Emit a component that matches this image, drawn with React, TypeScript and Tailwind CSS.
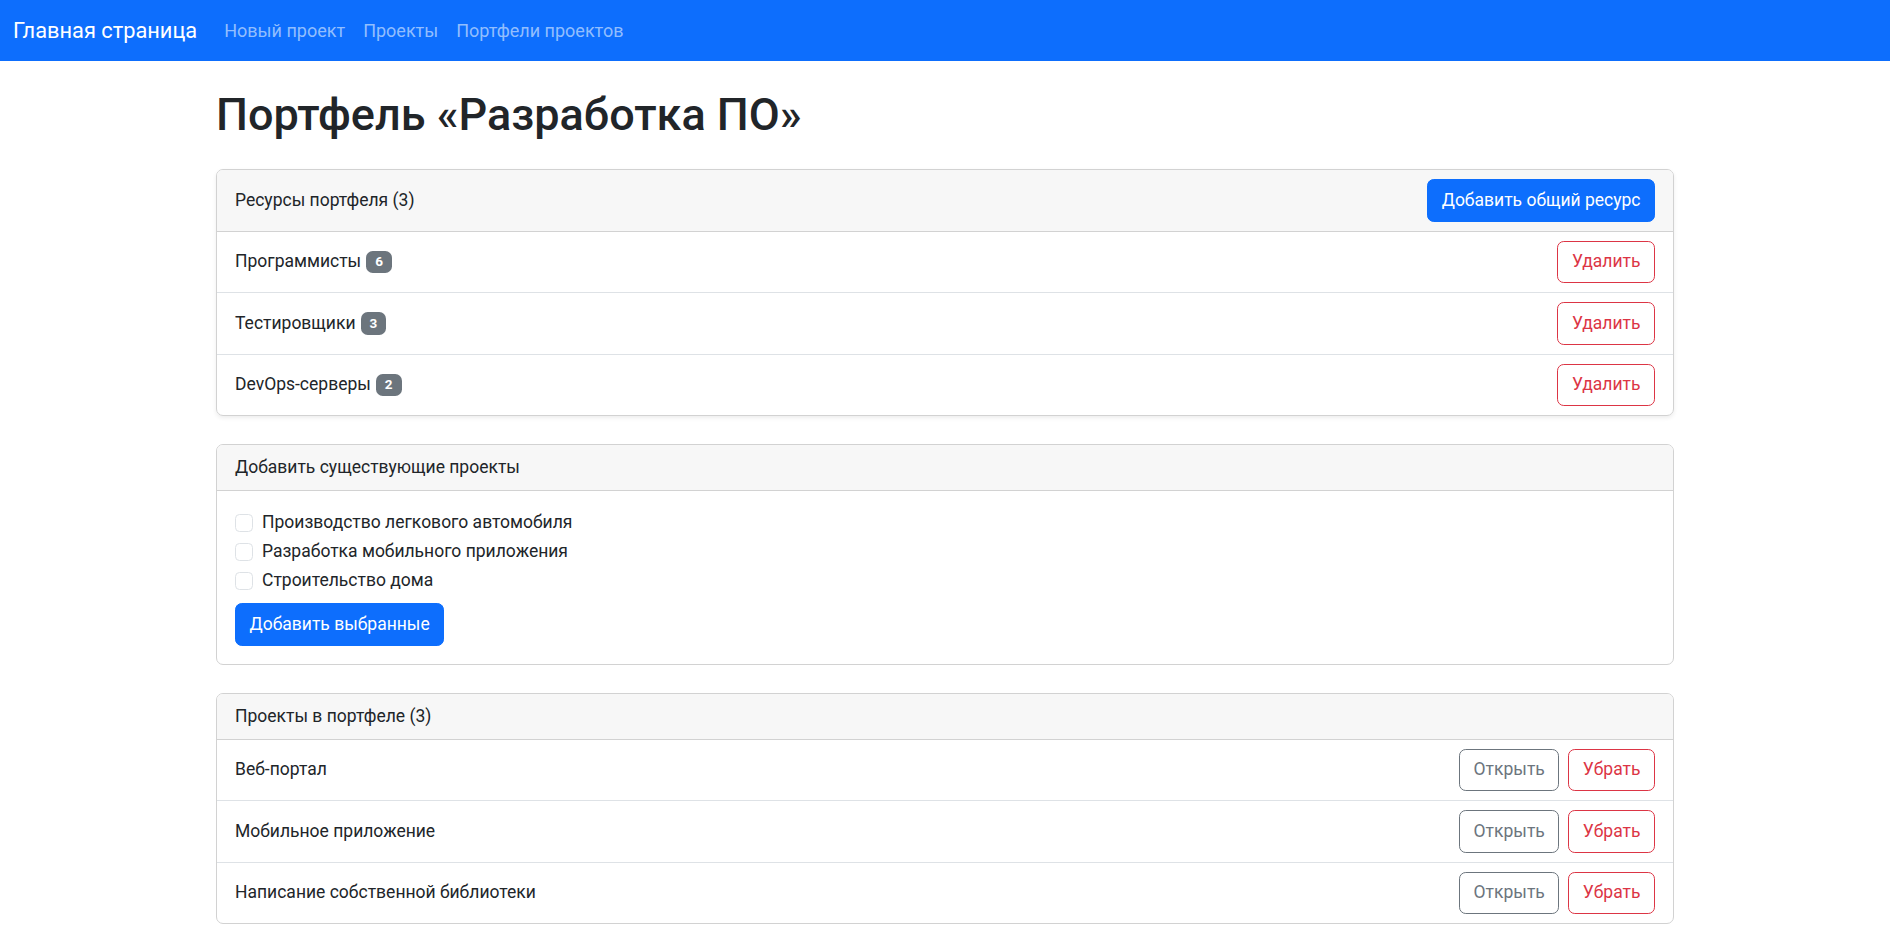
import React from "react";

function Badge({ n }: { n: number }) {
  return (
    <span className="ml-[5px] inline-block rounded-[6.75px] bg-[#6c757d] px-[9px] py-[4.5px] align-[1px] text-[13.5px] font-bold leading-[13.5px] text-white">
      {n}
    </span>
  );
}

function Check({ label }: { label: string }) {
  return (
    <label className="mb-[2px] flex h-[27px] items-center gap-[9px]">
      <input
        type="checkbox"
        className="h-[18px] w-[18px] shrink-0 appearance-none rounded-[4.5px] border border-[#dee2e6] bg-white"
      />
      <span>{label}</span>
    </label>
  );
}

export default function App() {
  const resources = [
    { name: "Программисты", n: 6 },
    { name: "Тестировщики", n: 3 },
    { name: "DevOps-серверы", n: 2 },
  ];
  const projects = ["Веб-портал", "Мобильное приложение", "Написание собственной библиотеки"];
  return (
    <div className="h-[930px] overflow-hidden bg-white font-['Roboto',sans-serif] text-[17.5px] leading-[27px] text-[#212529]">
      <nav className="flex h-[61px] items-center bg-[#0d6efd] px-[13px]">
        <a className="mr-[18px] text-[21.8px] leading-[34px] text-white">Главная страница</a>
        <ul className="flex text-[18px]">
          <li className="px-[9px] text-[#92befe]">Новый проект</li>
          <li className="px-[9px] text-[#92befe]">Проекты</li>
          <li className="px-[9px] text-[#92befe]">Портфели проектов</li>
        </ul>
      </nav>

      <main className="mx-auto w-[1458px] pt-[27px]">
        <h1 className="mb-[27px] text-[45px] font-medium leading-[54px]">Портфель «Разработка ПО»</h1>

        <section className="mb-[28px] overflow-hidden rounded-[7px] border border-[#d2d2d2] shadow-[0_2px_4px_rgba(0,0,0,0.075)]">
          <div className="flex items-center justify-between border-b border-[#d2d2d2] bg-[#f7f7f7] px-[18px] py-[9px]">
            <span>Ресурсы портфеля (3)</span>
            <button className="rounded-[6.75px] border border-[#0d6efd] bg-[#0d6efd] px-[13.5px] py-[6.75px] text-white">
              Добавить общий ресурс
            </button>
          </div>
          {resources.map((r) => (
            <div
              key={r.name}
              className="flex items-center justify-between border-b border-[#dee2e6] px-[18px] py-[9px] last:border-b-0"
            >
              <span>
                {r.name}
                <Badge n={r.n} />
              </span>
              <button className="rounded-[6.75px] border border-[#dc3545] bg-white px-[13.5px] py-[6.75px] text-[#dc3545]">
                Удалить
              </button>
            </div>
          ))}
        </section>

        <section className="mb-[28px] overflow-hidden rounded-[7px] border border-[#d2d2d2]">
          <div className="border-b border-[#d2d2d2] bg-[#f7f7f7] px-[18px] py-[9px]">Добавить существующие проекты</div>
          <div className="p-[18px]">
            <Check label="Производство легкового автомобиля" />
            <Check label="Разработка мобильного приложения" />
            <Check label="Строительство дома" />
            <button className="mt-[7px] rounded-[6.75px] border border-[#0d6efd] bg-[#0d6efd] px-[13.5px] py-[6.75px] text-white">
              Добавить выбранные
            </button>
          </div>
        </section>

        <section className="overflow-hidden rounded-[7px] border border-[#d2d2d2]">
          <div className="border-b border-[#d2d2d2] bg-[#f7f7f7] px-[18px] py-[9px]">Проекты в портфеле (3)</div>
          {projects.map((p) => (
            <div
              key={p}
              className="flex items-center justify-between border-b border-[#dee2e6] px-[18px] py-[9px] last:border-b-0"
            >
              <span>{p}</span>
              <div className="flex gap-[9px]">
                <button className="rounded-[6.75px] border border-[#6c757d] bg-white px-[13.5px] py-[6.75px] text-[#6c757d]">
                  Открыть
                </button>
                <button className="rounded-[6.75px] border border-[#dc3545] bg-white px-[13.5px] py-[6.75px] text-[#dc3545]">
                  Убрать
                </button>
              </div>
            </div>
          ))}
        </section>
      </main>
    </div>
  );
}
